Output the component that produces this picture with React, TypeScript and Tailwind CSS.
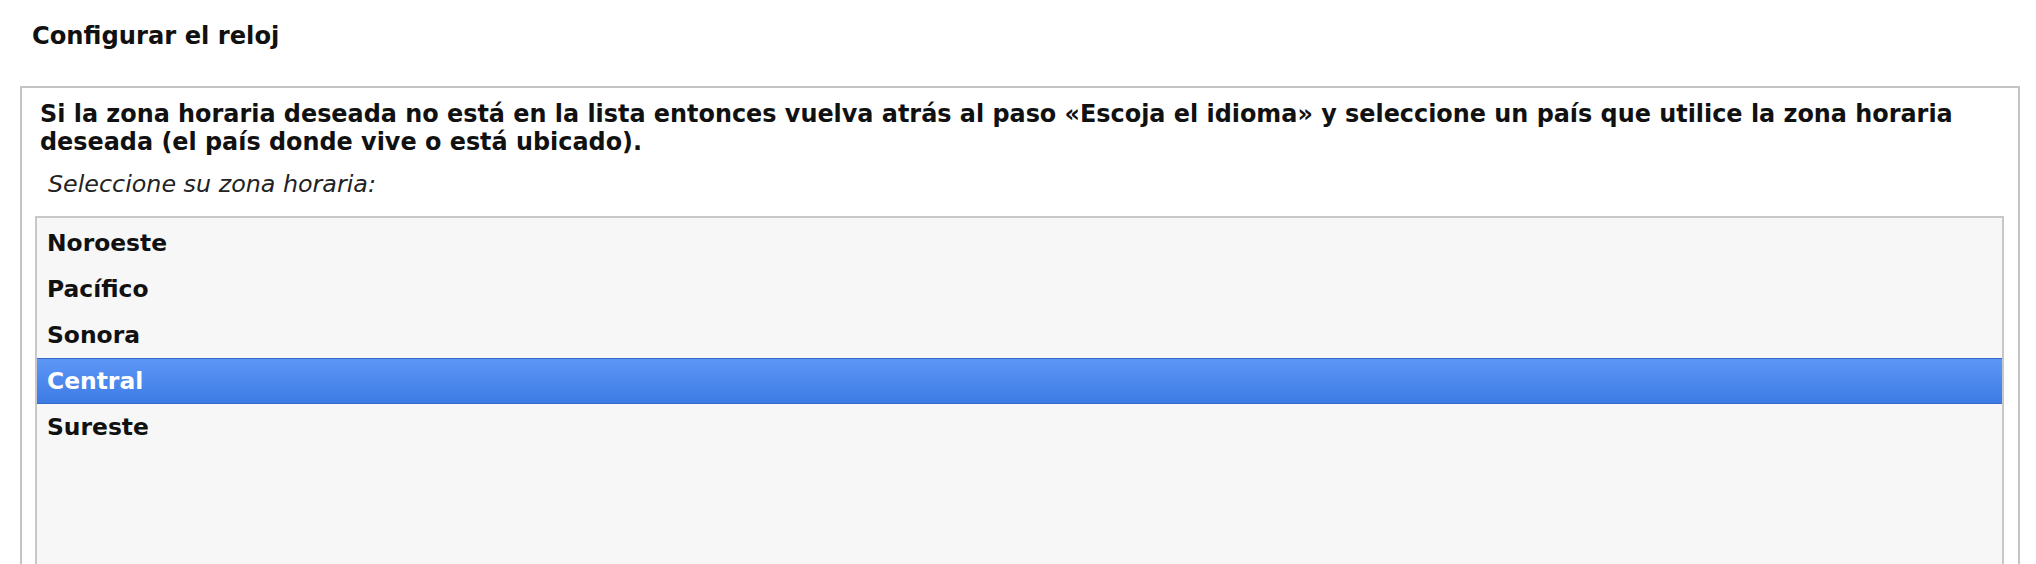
const zones = ["Noroeste", "Pacífico", "Sonora", "Central", "Sureste"];
const selected = "Central";

export default function App() {
  return (
    <div
      className="h-[564px] w-[2036px] overflow-hidden bg-white text-[23.4px] leading-[28px] text-[#111]"
      style={{ fontFamily: '"DejaVu Sans", "Liberation Sans", sans-serif' }}
    >
      <h1 className="pl-[32px] pt-[22px] text-[24.2px] font-bold">Configurar el reloj</h1>

      <div className="ml-[20px] mt-[36px] w-[2000px] border-2 border-[#c4c4c4] pb-0 pl-[13px] pr-[14px] pt-[12px]">
        <p className="pl-[5px] text-[23.9px] font-bold">
          Si la zona horaria deseada no está en la lista entonces vuelva atrás al paso «Escoja el idioma» y
          seleccione un país que utilice la zona horaria deseada (el país donde vive o está ubicado).
        </p>
        <p className="mt-[14px] pl-[13px] text-[23.8px] italic text-[#222]">Seleccione su zona horaria:</p>

        <ul className="mt-[18px] h-[400px] border-2 border-[#c8c8c8] bg-[#f7f7f7] pt-[2px]">
          {zones.map((zone) => (
            <li
              key={zone}
              className={
                zone === selected
                  ? "flex h-[46px] items-center border-y border-[#3568c8] bg-gradient-to-b from-[#5d97f6] to-[#3d7be5] pl-[10px] font-bold text-white"
                  : "flex h-[46px] items-center pl-[10px] font-bold"
              }
            >
              {zone}
            </li>
          ))}
        </ul>
      </div>
    </div>
  );
}
